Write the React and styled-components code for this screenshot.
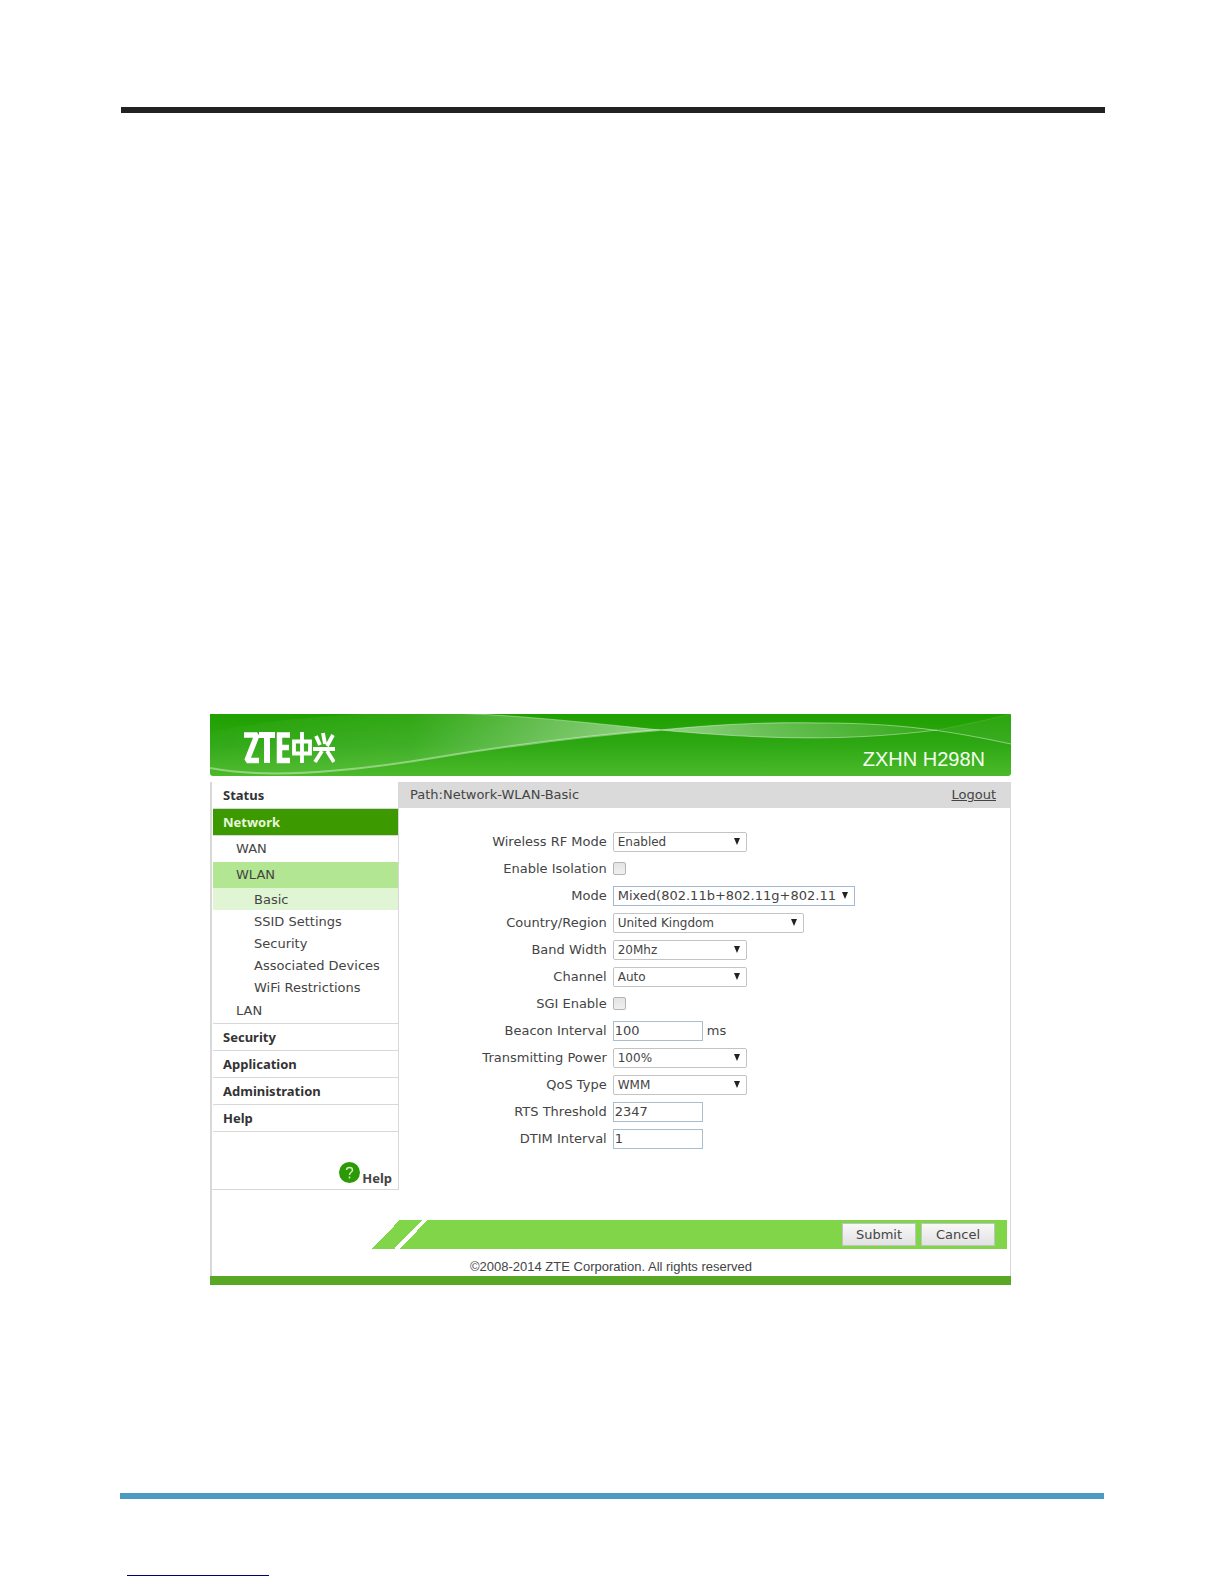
import React, { useState } from "react";
import styled, { createGlobalStyle } from "styled-components";

const fields = [
  { id: "rf", label: "Wireless RF Mode", type: "select", value: "Enabled", options: ["Enabled", "Disabled"] },
  { id: "isolation", label: "Enable Isolation", type: "checkbox" },
  { id: "mode", label: "Mode", type: "select", size: "large", focused: true, value: "Mixed(802.11b+802.11g+802.11" },
  { id: "country", label: "Country/Region", type: "select", size: "medium", value: "United Kingdom" },
  { id: "band", label: "Band Width", type: "select", value: "20Mhz", options: ["20Mhz", "40Mhz"] },
  { id: "channel", label: "Channel", type: "select", value: "Auto" },
  { id: "sgi", label: "SGI Enable", type: "checkbox" },
  { id: "beacon", label: "Beacon Interval", type: "text", value: "100", unit: "ms" },
  { id: "power", label: "Transmitting Power", type: "select", value: "100%" },
  { id: "qos", label: "QoS Type", type: "select", value: "WMM" },
  { id: "rts", label: "RTS Threshold", type: "text", value: "2347" },
  { id: "dtim", label: "DTIM Interval", type: "text", value: "1" },
];

const wlanPages = ["Basic", "SSID Settings", "Security", "Associated Devices", "WiFi Restrictions"];

function Logo() {
  return (
    <LogoSvg viewBox="0 0 92 32" role="img" aria-label="ZTE">
      <g fill="none" stroke="#fff">
        <path d="M1 3H14L4 28.500H16" strokeWidth="5.500" strokeLinejoin="bevel" />
        <path d="M16 3H32M24 3V31" strokeWidth="6" />
        <path d="M47 3H36.500V28.500H47M36 15.500H46" strokeWidth="5.500" />
      </g>
      <g fill="none" stroke="#fff" strokeWidth="3.800">
        <path d="M51 9.500H67V21.500H51ZM59 0V31" />
        <path d="M70 17H92M73 4L77 13M80 1L82 12M90 3L84 14M79 19L72 30M84 19L91 30" />
      </g>
    </LogoSvg>
  );
}

function Waves() {
  return (
    <WavesSvg viewBox="0 0 801 62" preserveAspectRatio="none" aria-hidden="true">
      <defs>
        <linearGradient id="waveLeft" x1="0" x2="1" y1="0" y2="0">
          <stop offset="0" stopColor="#fff" stopOpacity="0.02" />
          <stop offset="0.45" stopColor="#fff" stopOpacity="0.08" />
          <stop offset="0.75" stopColor="#fff" stopOpacity="0.32" />
          <stop offset="1" stopColor="#fff" stopOpacity="0.5" />
        </linearGradient>
        <linearGradient id="waveRight" x1="0" x2="1" y1="0" y2="0">
          <stop offset="0" stopColor="#fff" stopOpacity="0.5" />
          <stop offset="0.4" stopColor="#fff" stopOpacity="0.3" />
          <stop offset="1" stopColor="#fff" stopOpacity="0.06" />
        </linearGradient>
      </defs>
      <path
        d="M0 18C70 4 150 -3 240 -1C310 1 390 10 450 16C360 23 290 33 223 44C150 56 60 66 0 54Z"
        fill="url(#waveLeft)"
      />
      <path d="M450 16C510 10 560 8 610 9C650 9 690 12 727 16C640 27 560 26 450 16Z" fill="url(#waveRight)" />
      <path d="M727 16C755 11 780 5 801 0V30C775 24 750 19 727 16Z" fill="#fff" fillOpacity="0.06" />
      <g fill="none" stroke="#fff">
        <path d="M0 54C60 66 150 56 223 44C290 33 360 23 450 16" strokeOpacity="0.4" strokeWidth="2" />
        <path d="M240 -1C310 1 390 10 450 16C560 26 640 27 727 16" strokeOpacity="0.4" />
        <path d="M450 16C510 10 560 8 610 9C690 9 740 17 801 30" strokeOpacity="0.45" />
        <path d="M727 16C755 11 780 5 801 0" strokeOpacity="0.12" />
      </g>
    </WavesSvg>
  );
}

function Field({ field }) {
  const { id, label, type, value, options = [value], size, focused, unit } = field;

  return (
    <>
      <Label htmlFor={id}>{label}</Label>
      <Control>
        {type === "select" && (
          <SelectBox $size={size}>
            <Select id={id} defaultValue={value} $focused={focused}>
              {options.map((option) => (
                <option key={option}>{option}</option>
              ))}
            </Select>
            <Caret viewBox="0 0 6 7" aria-hidden="true">
              <path d="M0 0H6L3 7Z" fill="#222" />
            </Caret>
          </SelectBox>
        )}
        {type === "checkbox" && <Checkbox id={id} type="checkbox" />}
        {type === "text" && <TextInput id={id} type="text" defaultValue={value} />}
        {unit && <Unit>{unit}</Unit>}
      </Control>
    </>
  );
}

function App() {
  const [page, setPage] = useState("Basic");

  return (
    <Page>
      <GlobalStyle />
      <TopRule />
      <Panel>
        <Banner>
          <Waves />
          <Logo />
          <Model>ZXHN H298N</Model>
        </Banner>
        <Frame>
          <Columns>
            <Sidebar>
              <MenuItem href="#">Status</MenuItem>
              <MenuItem href="#" $active>
                Network
              </MenuItem>
              <SubItem href="#">WAN</SubItem>
              <SubItem href="#" $active>
                WLAN
              </SubItem>
              <PageList>
                {wlanPages.map((name) => (
                  <PageItem key={name} href="#" $active={name === page} onClick={() => setPage(name)}>
                    {name}
                  </PageItem>
                ))}
              </PageList>
              <SubItem href="#" $last>
                LAN
              </SubItem>
              <MenuItem href="#">Security</MenuItem>
              <MenuItem href="#">Application</MenuItem>
              <MenuItem href="#">Administration</MenuItem>
              <MenuItem href="#">Help</MenuItem>
              <HelpLink href="#">
                <HelpIcon viewBox="0 0 21 21" aria-hidden="true">
                  <circle cx="10.500" cy="10.500" r="10.500" fill="#2c9a06" />
                  <path
                    d="M7.500 8C7.500 4.500 13.500 4.500 13.500 8C13.500 10.500 10.500 10 10.500 13M10.500 14.500V16.500"
                    fill="none"
                    stroke="#c9eeb5"
                    strokeWidth="1.500"
                  />
                </HelpIcon>
                Help
              </HelpLink>
            </Sidebar>
            <Main>
              <PathBar>
                <span>Path:Network-WLAN-{page}</span>
                <Logout href="#">Logout</Logout>
              </PathBar>
              <Form id="wlan" onSubmit={(e) => e.preventDefault()}>
                {fields.map((field) => (
                  <Field key={field.id} field={field} />
                ))}
              </Form>
            </Main>
          </Columns>
          <Actions>
            <Button type="submit" form="wlan">
              Submit
            </Button>
            <Button type="reset" form="wlan">
              Cancel
            </Button>
          </Actions>
          <Copyright>©2008-2014 ZTE Corporation. All rights reserved</Copyright>
        </Frame>
      </Panel>
      <BottomRule />
      <FootLink href="#" aria-label="Website" />
    </Page>
  );
}

export default App;

const GlobalStyle = createGlobalStyle`
  * {
    box-sizing: border-box;
  }

  body {
    margin: 0;
    background: #fff;
    color: #444;
    font-family: "DejaVu Sans", Verdana, sans-serif;
    font-size: 13px;
  }

  a {
    color: inherit;
    text-decoration: none;
  }
`;

const Page = styled.div`
  display: flex;
  flex-direction: column;
  padding: 107px 120px 8px;
`;

const TopRule = styled.div`
  height: 6px;
  margin: 0 -1px 0 1px;
  background: #222;
`;

const BottomRule = styled.div`
  height: 6px;
  margin-top: 208px;
  background: #4a9ac2;
`;

const FootLink = styled.a`
  width: 142px;
  height: 1px;
  margin: 76px 0 0 7px;
  background: #00007c;
`;

const Panel = styled.div`
  margin: 601px 93px 0 90px;
  border-bottom: 9px solid #58a825;
`;

const Banner = styled.header`
  position: relative;
  display: flex;
  justify-content: space-between;
  height: 62px;
  padding: 18px 26px 0 33px;
  overflow: hidden;
  border-radius: 0 0 3px 3px;
  background: linear-gradient(#1fa000, #2ea814 50%, #4cba2a);
`;

const WavesSvg = styled.svg`
  position: absolute;
  inset: 0;
  width: 100%;
  height: 100%;
`;

const LogoSvg = styled.svg`
  position: relative;
  width: 92px;
  height: 32px;
`;

const Model = styled.div`
  position: relative;
  padding-top: 15px;
  color: #f4fff0;
  font-family: "Liberation Sans", Arial, sans-serif;
  font-size: 20px;
  line-height: 24px;
`;

const Frame = styled.div`
  margin-top: 6px;
  border: solid #d8d8d8;
  border-width: 0 1px 0 2px;
`;

const Columns = styled.div`
  display: flex;
  align-items: flex-start;
`;

const Sidebar = styled.nav`
  display: flex;
  flex-direction: column;
  width: 187px;
  padding-left: 1px;
  border: solid #d8d8d8;
  border-width: 0 1px 1px 0;
`;

const MenuItem = styled.a`
  height: 27px;
  padding-left: 10px;
  border-bottom: 1px solid #d8d8d8;
  background: ${(props) => (props.$active ? "#3c9a00" : "#fff")};
  color: ${(props) => (props.$active ? "#e8f8dc" : "#333")};
  font-family: "Noto Sans", sans-serif;
  font-weight: bold;
  line-height: 26px;
`;

const SubItem = styled.a`
  height: 26px;
  padding-left: 23px;
  border-bottom: ${(props) => (props.$last ? "1px solid #d8d8d8" : 0)};
  background: ${(props) => (props.$active ? "#b3e692" : "#fff")};
  line-height: 26px;
`;

const PageList = styled.div`
  display: flex;
  flex-direction: column;
`;

const PageItem = styled.a`
  height: 22px;
  padding-left: 41px;
  background: ${(props) => (props.$active ? "#e0f5d3" : "#fff")};
  line-height: 24px;
`;

const HelpLink = styled.a`
  display: flex;
  align-items: flex-end;
  justify-content: flex-end;
  gap: 2px;
  padding: 30px 6px 1px;
  font-family: "Noto Sans", sans-serif;
  font-weight: bold;
  line-height: 20px;
`;

const HelpIcon = styled.svg`
  width: 21px;
  height: 21px;
  margin-bottom: 5px;
`;

const Main = styled.main`
  flex: 1;
`;

const PathBar = styled.div`
  display: flex;
  justify-content: space-between;
  height: 26px;
  padding: 0 14px 0 11px;
  background: #dadada;
  line-height: 25px;
`;

const Logout = styled.a`
  text-decoration: underline;
`;

const Form = styled.form`
  display: grid;
  grid-template-columns: 34% 1fr;
  grid-auto-rows: 27px;
  column-gap: 6px;
  padding-top: 20px;
`;

const Label = styled.label`
  line-height: 28px;
  text-align: right;
`;

const Control = styled.div`
  display: flex;
  align-items: center;
`;

const widths = { small: 134, medium: 191, large: 242 };

const SelectBox = styled.div`
  position: relative;
  width: ${(props) => widths[props.$size || "small"]}px;
`;

const Select = styled.select`
  display: block;
  width: 100%;
  height: 20px;
  padding: 0 18px 0 4px;
  border: 1px solid ${(props) => (props.$focused ? "#a3b8d2" : "#c4c4c4")};
  border-radius: ${(props) => (props.$focused ? 0 : 2)}px;
  appearance: none;
  background: #fff;
  color: #444;
  font-family: inherit;
  font-size: ${(props) => (props.$focused ? 13 : 12)}px;
`;

const Caret = styled.svg`
  position: absolute;
  top: 6px;
  right: 7px;
  width: 6px;
  height: 7px;
  pointer-events: none;
`;

const Checkbox = styled.input`
  width: 13px;
  height: 13px;
  margin: 0;
  border: 1px solid #b4b4b4;
  border-radius: 2px;
  appearance: none;
  background: linear-gradient(#e4e4e4, #f0f0f0);

  &:checked {
    background: #3c9a00;
  }
`;

const TextInput = styled.input`
  width: 90px;
  height: 20px;
  padding: 0 1px;
  border: 1px solid #a9bfcd;
  background: #fff;
  color: #444;
  font: inherit;
`;

const Unit = styled.span`
  padding-left: 4px;
`;

const Actions = styled.div`
  display: flex;
  align-items: center;
  justify-content: flex-end;
  gap: 5px;
  height: 29px;
  margin: 30px 3px 0 160px;
  padding-right: 12px;
  background: linear-gradient(134deg, transparent 0 20px, #80d648 20px 36px, #fff 36px 40px, #80d648 40px);
`;

const Button = styled.button`
  width: 74px;
  height: 23px;
  padding: 0;
  border: 1px solid #c2c2c2;
  background: linear-gradient(#f8f8f8, #e2e2e2);
  color: #444;
  font: inherit;
`;

const Copyright = styled.footer`
  padding-top: 9px;
  font-family: "Liberation Sans", Arial, sans-serif;
  line-height: 18px;
  text-align: center;
`;
